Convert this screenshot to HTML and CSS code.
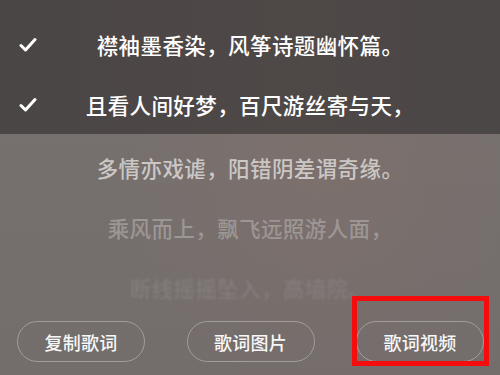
FILE: index.html
```html
<!DOCTYPE html>
<html lang="zh-CN">
<head>
<meta charset="utf-8">
<link rel="stylesheet" href="styles.css">
</head>
<body>
<div class="screen">
  <div class="lyrics">
    <div class="selected">
      <div class="row">
        <span class="check"><svg width="18" height="16" viewBox="0 0 18 16"><path d="M2 8.5 L6.5 13 L16 2.5" fill="none" stroke="#fff" stroke-width="3" stroke-linecap="round" stroke-linejoin="round"/></svg></span>
        <span class="text">襟袖墨香染，风筝诗题幽怀篇。</span>
      </div>
      <div class="row">
        <span class="check"><svg width="18" height="16" viewBox="0 0 18 16"><path d="M2 8.5 L6.5 13 L16 2.5" fill="none" stroke="#fff" stroke-width="3" stroke-linecap="round" stroke-linejoin="round"/></svg></span>
        <span class="text">且看人间好梦，百尺游丝寄与天，</span>
      </div>
    </div>
    <div class="rest">
      <div class="row fade1"><span class="check"></span><span class="text">多情亦戏谑，阳错阴差谓奇缘。</span></div>
      <div class="row fade2"><span class="check"></span><span class="text">乘风而上，飘飞远照游人面，</span></div>
      <div class="row fade3"><span class="check"></span><span class="text">断线摇摇坠入，高墙院。</span></div>
    </div>
  </div>
  <div class="actions">
    <button class="btn">复制歌词</button>
    <button class="btn">歌词图片</button>
    <span class="marked"><button class="btn">歌词视频</button></span>
  </div>
</div>
</body>
</html>
```
FILE: styles.css
```css
* { box-sizing: border-box; }
html, body { margin: 0; padding: 0; }
body {
  width: 500px;
  height: 375px;
  overflow: hidden;
  font-family: "Noto Sans CJK SC", "Noto Sans", sans-serif;
  background: #746e6c;
}
.screen {
  width: 500px;
  height: 375px;
  display: flex;
  flex-direction: column;
  background:
    radial-gradient(ellipse 200px 260px at 320px 170px, rgba(130,112,108,0.55), rgba(130,112,108,0) 100%),
    linear-gradient(180deg, #78726f 0%, #736d6b 100%);
}
.selected {
  height: 134px;
  padding-top: 14px;
  background: linear-gradient(90deg, #4a4645 0%, #4e4847 60%, #4b4746 100%);
}
.rest { padding-top: 3px; }
.row {
  height: 60px;
  display: grid;
  grid-template-columns: 55px 1fr 55px;
  align-items: center;
}
.check {
  display: flex;
  align-items: center;
  padding-left: 19px;
  padding-top: 2px;
}
.text {
  text-align: center;
  font-size: 21.5px;
  color: #ffffff;
  letter-spacing: 0.4px;
  white-space: nowrap;
  font-weight: 500;
}
.fade1 .text { color: #cbc7c5; }
.fade2 .text { color: #9c9694; }
.fade3 .text { color: #837d7b; filter: blur(0.8px); }
.actions {
  display: flex;
  justify-content: space-between;
  padding: 4px 16px 0 17px;
}
.btn {
  width: 128px;
  height: 41px;
  border: 1px solid #a39e9b;
  border-radius: 21px;
  background: transparent;
  color: #f7f7f7;
  font-family: "Noto Sans CJK SC", sans-serif;
  font-size: 18px;
  font-weight: 500;
  padding: 0;
  letter-spacing: 0.3px;
}
.marked {
  position: relative;
  display: flex;
}
.marked::after {
  content: "";
  position: absolute;
  top: -25px;
  left: -4px;
  right: -5px;
  bottom: -4px;
  border: 5px solid #f50c0c;
  pointer-events: none;
}
```
